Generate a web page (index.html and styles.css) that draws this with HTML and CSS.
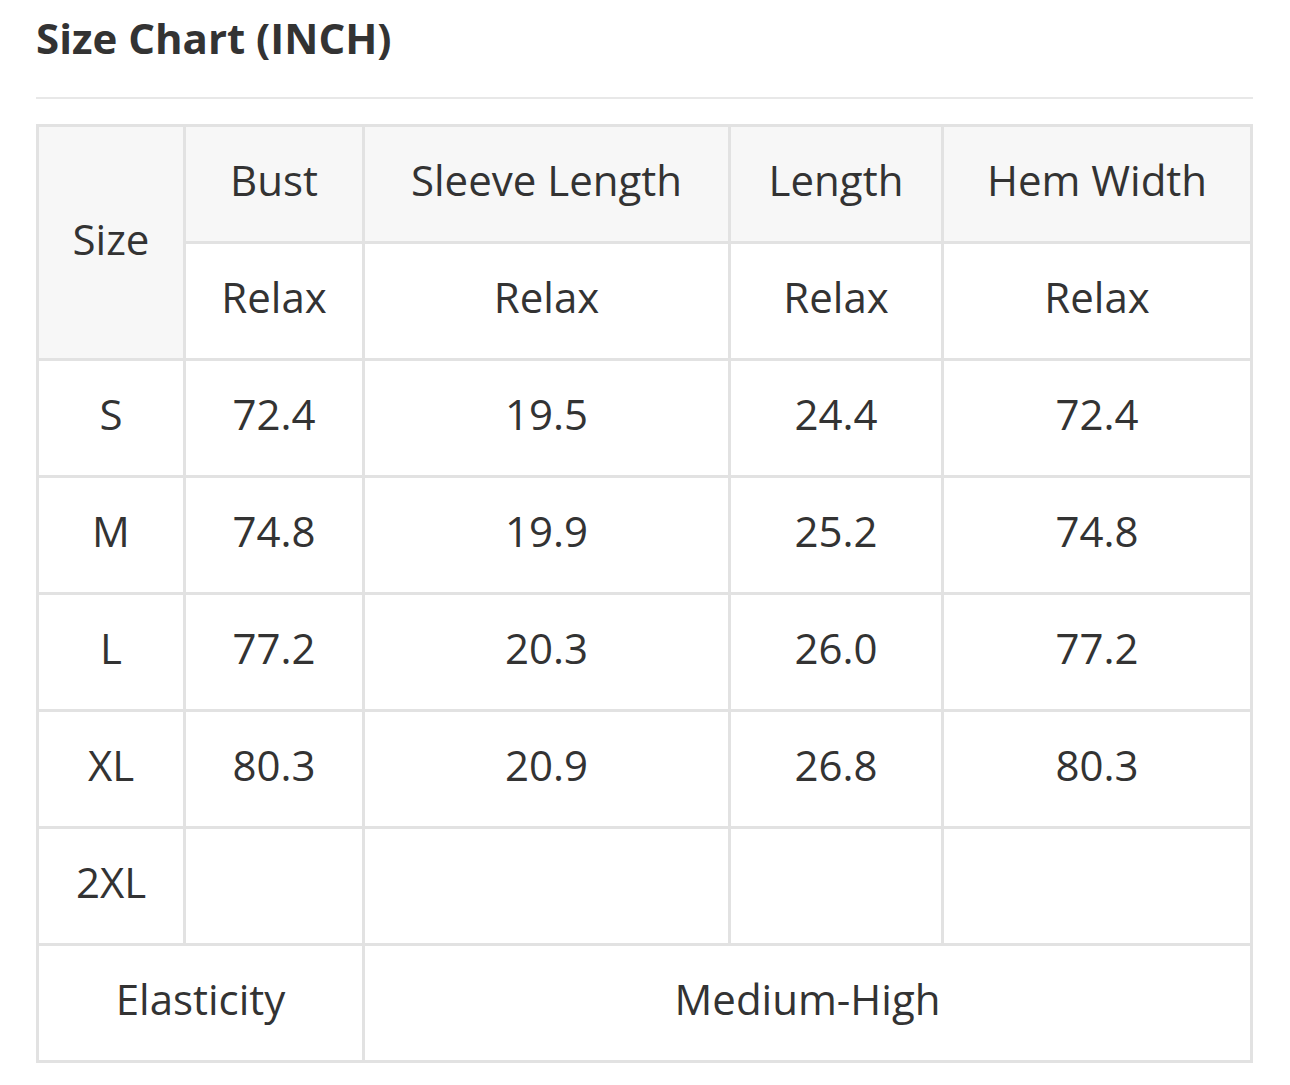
FILE: index.html
```html
<!DOCTYPE html>
<html>
<head>
<meta charset="utf-8">
<link rel="stylesheet" href="styles.css">
</head>
<body>
<div class="page">
  <h1 class="title">Size Chart (INCH)</h1>
  <div class="rule"></div>
  <table class="chart">
    <colgroup>
      <col class="c1"><col class="c2"><col class="c3"><col class="c4"><col class="c5">
    </colgroup>
    <tr class="head">
      <td rowspan="2" class="shade">Size</td>
      <td class="shade">Bust</td>
      <td class="shade">Sleeve Length</td>
      <td class="shade">Length</td>
      <td class="shade">Hem Width</td>
    </tr>
    <tr>
      <td>Relax</td><td>Relax</td><td>Relax</td><td>Relax</td>
    </tr>
    <tr><td>S</td><td>72.4</td><td>19.5</td><td>24.4</td><td>72.4</td></tr>
    <tr><td>M</td><td>74.8</td><td>19.9</td><td>25.2</td><td>74.8</td></tr>
    <tr><td>L</td><td>77.2</td><td>20.3</td><td>26.0</td><td>77.2</td></tr>
    <tr><td>XL</td><td>80.3</td><td>20.9</td><td>26.8</td><td>80.3</td></tr>
    <tr><td>2XL</td><td></td><td></td><td></td><td></td></tr>
    <tr><td colspan="2">Elasticity</td><td colspan="3">Medium-High</td></tr>
  </table>
</div>
</body>
</html>
```
FILE: styles.css
```css
html, body {
  margin: 0;
  padding: 0;
  background: #ffffff;
}
.page {
  padding: 14px 36px 0 36px;
  font-family: "Open Sans", "Liberation Sans", sans-serif;
  color: #333333;
}
.title {
  margin: 0;
  font-size: 42px;
  line-height: 48px;
  font-weight: 700;
  color: #333333;
}
.rule {
  margin-top: 35px;
  height: 2px;
  width: 1217px;
  background: #e8e8e8;
}
.chart {
  margin-top: 25px;
  border-collapse: collapse;
  table-layout: fixed;
  width: 1217px;
  margin-left: 0;
}
.c1 { width: 147px; }
.c2 { width: 179px; }
.c3 { width: 366px; }
.c4 { width: 213px; }
.c5 { width: 309px; }
.chart td {
  border: 3px solid #e2e2e2;
  height: 106px;
  padding: 0 0 8px 0;
  text-align: center;
  vertical-align: middle;
  font-size: 42px;
  line-height: 48px;
  color: #333333;
  background: #ffffff;
}
.chart td.shade {
  background: #f7f7f7;
}
```
